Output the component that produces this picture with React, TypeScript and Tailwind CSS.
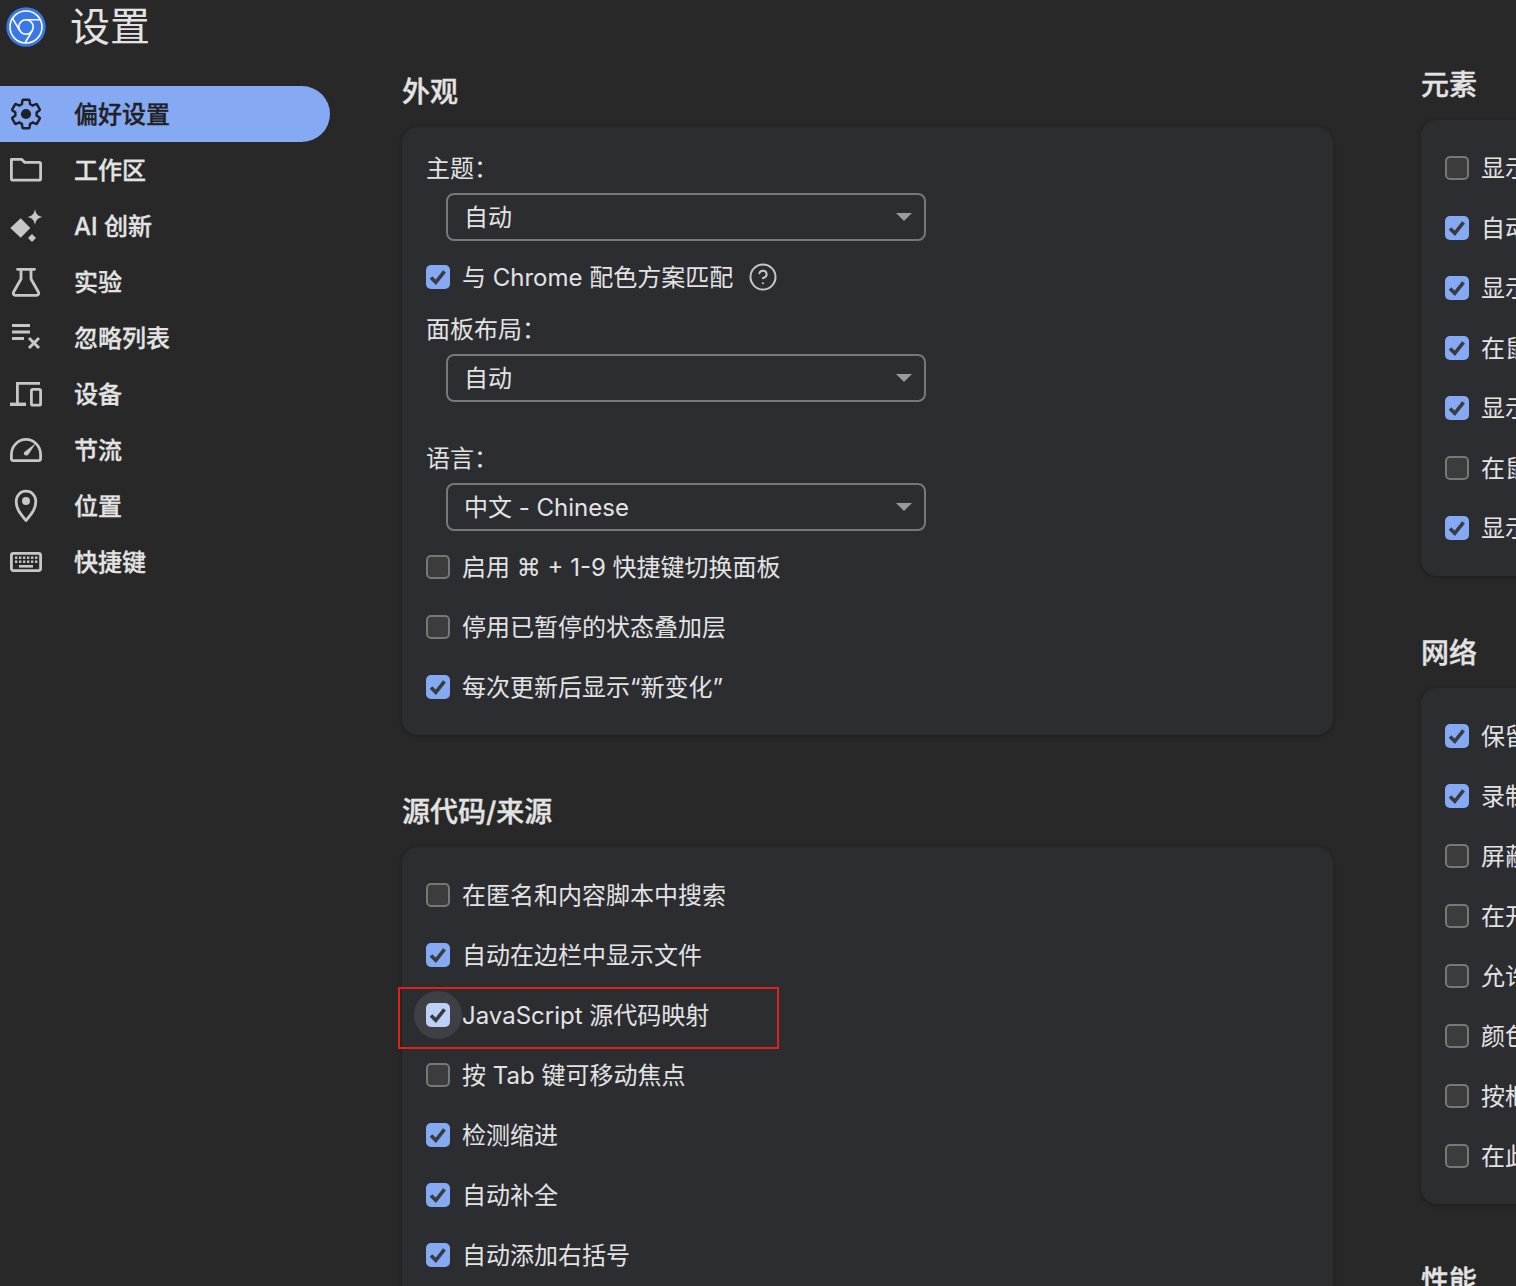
import React from 'react';
import { CircleHelp } from 'lucide-react';

const NAV_COLOR = '#c7c7c7';

function GearIcon() {
  return (
    <svg width="36" height="36" viewBox="0 0 24 24" fill="none" className="ml-2">
      <path
        d="M19.43 12.98c.04-.32.07-.64.07-.98 0-.34-.03-.66-.07-.98l2.11-1.65c.19-.15.24-.42.12-.64l-2-3.46a.5.5 0 0 0-.61-.22l-2.49 1c-.52-.4-1.08-.73-1.69-.98l-.38-2.65A.488.488 0 0 0 14 2h-4c-.25 0-.46.18-.49.42l-.38 2.65c-.61.25-1.17.59-1.69.98l-2.49-1a.566.566 0 0 0-.61.22l-2 3.46c-.13.22-.07.49.12.64l2.11 1.65c-.04.32-.07.65-.07.98 0 .33.03.66.07.98l-2.11 1.65c-.19.15-.24.42-.12.64l2 3.46a.5.5 0 0 0 .61.22l2.49-1c.52.4 1.08.73 1.69.98l.38 2.65c.03.24.24.42.49.42h4c.25 0 .46-.18.49-.42l.38-2.65c.61-.25 1.17-.59 1.69-.98l2.49 1a.5.5 0 0 0 .61-.22l2-3.46c.12-.22.07-.49-.12-.64l-2.11-1.65z"
        stroke="#1f2125"
        strokeWidth="1.700"
        transform="translate(.6 .6) scale(.95)"
      />
      <circle cx="12" cy="12" r="3.400" fill="#1f2125" />
    </svg>
  );
}

// all nav icons are drawn on a 40px box
function Icon40({ children }: { children: React.ReactNode }) {
  return (
    <svg width="40" height="40" viewBox="0 0 40 40" fill="none" stroke={NAV_COLOR} strokeWidth="2.800" className="ml-1.5 shrink-0">
      {children}
    </svg>
  );
}

const FolderIcon = () => (
  <Icon40>
    <path d="M5.400 9.400h10.400l3 3h14.400c1 0 1.400.6 1.400 1.400v15c0 1-.4 1.400-1.400 1.400H6.800c-1 0-1.400-.4-1.400-1.400z" strokeLinejoin="round" />
  </Icon40>
);

const SparkIcon = () => (
  <Icon40>
    <g fill={NAV_COLOR} stroke="none">
      <path d="M14.700 12.200l9.600 9.800-9.600 9.800L4.300 22z" />
      <path d="M26 28l4 4-4 4-4-4z" />
      <path d="M29 3c.8 4.600 2.400 6.800 7.500 8-5.100 1.200-6.700 3.400-7.500 8-.8-4.600-2.400-6.800-7.500-8 5.100-1.200 6.700-3.400 7.500-8z" />
    </g>
  </Icon40>
);

const FlaskIcon = () => (
  <Icon40>
    <path d="M11.500 7.300h17M15 7.300v9.700L7.600 30c-.9 1.800 0 3.300 2 3.300h20.800c2 0 2.900-1.500 2-3.300L25 17V7.300" strokeLinejoin="round" strokeLinecap="round" />
  </Icon40>
);

const ListXIcon = () => (
  <Icon40>
    <path d="M6 7.500h18M6 14h18M6 20.500h12" />
    <path d="M23 20l10 10M33 20L23 30" strokeWidth="3" />
  </Icon40>
);

const DevicesIcon = () => (
  <Icon40>
    <path d="M34 9.400H11.400V29" />
    <path d="M4 30.300h16" strokeWidth="3.400" />
    <rect x="25.400" y="15.400" width="9.200" height="15.800" rx="1.500" />
  </Icon40>
);

const GaugeIcon = () => (
  <Icon40>
    <path d="M7.200 30.600h25.600c1.400 0 1.800-.7 1.800-2v-4c0-8.400-6.600-15.200-14.600-15.200S5.400 16.200 5.400 24.600v4c0 1.300.4 2 1.800 2z" strokeLinejoin="round" />
    <path d="M30 13L22.500 24.500c-1 1.500-3.600 1.300-4.500-.2-.5-1.100 0-2.200 1-2.800z" fill={NAV_COLOR} stroke="none" />
  </Icon40>
);

const PinIcon = () => (
  <Icon40>
    <path d="M20 34.500C14 27.500 10.200 22.500 10.200 15.500 10.200 9.500 14.500 5.200 20 5.200s9.800 4.300 9.800 10.300c0 7-3.800 12-9.800 19z" strokeLinejoin="round" />
    <circle cx="20" cy="15" r="4" fill={NAV_COLOR} stroke="none" />
  </Icon40>
);

const KeyboardIcon = () => (
  <Icon40>
    <rect x="5.400" y="11.400" width="29.200" height="17.200" rx="2" />
    <g fill={NAV_COLOR} stroke="none">
      {[9, 13, 17, 21, 25, 29].map((x) => (
        <React.Fragment key={x}>
          <rect x={x} y="14.500" width="2.400" height="2.400" />
          <rect x={x} y="18.500" width="2.400" height="2.400" />
        </React.Fragment>
      ))}
      <rect x="13" y="23" width="14" height="2.600" />
    </g>
  </Icon40>
);

function Logo() {
  return (
    <svg width="40" height="40" viewBox="0 0 40 40" fill="none" className="ml-1.5">
      <circle cx="20" cy="20" r="19.700" fill="#3b78e7" />
      <g stroke="#fff" strokeWidth="1.600" fill="none">
        <circle cx="20" cy="20" r="16" />
        <circle cx="20" cy="20" r="7.200" />
        <path d="M20 12.800h14.500M13.700 23.600L6.400 11.200M26.300 23.600L19 36" />
      </g>
    </svg>
  );
}

const NAV_ITEMS = [
  { label: '工作区', icon: FolderIcon },
  { label: 'AI 创新', icon: SparkIcon },
  { label: '实验', icon: FlaskIcon },
  { label: '忽略列表', icon: ListXIcon },
  { label: '设备', icon: DevicesIcon },
  { label: '节流', icon: GaugeIcon },
  { label: '位置', icon: PinIcon },
  { label: '快捷键', icon: KeyboardIcon },
];

function Checkbox({ checked, focused }: { checked: boolean; focused?: boolean }) {
  if (!checked) {
    return <span className="w-6 h-6 shrink-0 rounded-[5px] border-2 border-[#76777a] bg-[#3c3c3c]" />;
  }
  return (
    <span className="relative w-6 h-6 shrink-0">
      {focused && <span className="absolute -inset-3 rounded-full bg-[#3f4045]" />}
      <span className={`absolute inset-0 rounded-[5px] flex items-center justify-center ${focused ? 'bg-[#bdd0f8]' : 'bg-[#85a9f2]'}`}>
        <svg width="24" height="24" viewBox="0 0 24 24" fill="none" stroke="#3a3b3f" strokeWidth="3.600">
          <path d="M5 12.500l4.800 4.800 8.700-11" />
        </svg>
      </span>
    </span>
  );
}

function CheckRow({ label, checked, focused, children }: { label: React.ReactNode; checked: boolean; focused?: boolean; children?: React.ReactNode }) {
  return (
    <div className="relative h-[60px] flex items-center gap-3 whitespace-nowrap">
      <Checkbox checked={checked} focused={focused} />
      <span className="relative translate-y-px">{label}</span>
      {children}
    </div>
  );
}

function Select({ value }: { value: string }) {
  return (
    <div className="ml-5 mt-[9px] w-[480px] h-12 rounded-lg border-2 border-[#77787b] pl-4 pr-3 flex items-center justify-between">
      <span className="translate-y-px">{value}</span>
      <svg width="16" height="8" viewBox="0 0 16 8">
        <path d="M0 0h16L8 8z" fill="#9b9b9b" />
      </svg>
    </div>
  );
}

function Card({ children, className = '' }: { children: React.ReactNode; className?: string }) {
  return <div className={`bg-[#2c2d31] rounded-2xl px-6 shadow-[0_1px_4px_rgba(0,0,0,0.3)] ${className}`}>{children}</div>;
}

function Heading({ children, className = '' }: { children: React.ReactNode; className?: string }) {
  return <h2 className={`h-10 leading-10 mb-[15px] text-[28px] font-medium text-[#e3e3e3] [-webkit-text-stroke:0.35px_currentColor] ${className}`}>{children}</h2>;
}

const ELEMENT_ROWS: [string, boolean][] = [
  ['显示用户代理 Shadow DOM', false],
  ['自动换行', true],
  ['显示 HTML 注释', true],
  ['在鼠标悬停时显示标尺', true],
  ['显示 CSS 文档提示', true],
  ['在鼠标悬停时显示详情', false],
  ['显示“滚动到视图”', true],
];

const NETWORK_ROWS: [string, boolean][] = [
  ['保留日志', true],
  ['录制网络日志', true],
  ['屏蔽广告', false],
  ['在开发者工具打开时停用缓存', false],
  ['允许生成 HAR', false],
  ['颜色代码资源类型', false],
  ['按框架分组', false],
  ['在此面板中显示', false],
];

const SOURCE_ROWS: [string, boolean][] = [
  ['在匿名和内容脚本中搜索', false],
  ['自动在边栏中显示文件', true],
  ['JavaScript 源代码映射', true],
  ['按 Tab 键可移动焦点', false],
  ['检测缩进', true],
  ['自动补全', true],
  ['自动添加右括号', true],
];

export default function App() {
  return (
    <div className="h-[1286px] w-full overflow-hidden flex bg-[#282828] text-[24px] leading-8 text-[#e3e3e3] font-['Inter','Noto_Sans_CJK_SC',sans-serif]">
      {/* Sidebar */}
      <aside className="w-[402px] shrink-0">
        <div className="h-[54px] flex items-center">
          <Logo />
          <h1 className="ml-6 text-[40px] leading-[54px] font-normal text-[#e3e3e3]">设置</h1>
        </div>
        <nav className="mt-8 w-[330px] [-webkit-text-stroke:0.3px_currentColor]">
          <div className="h-14 rounded-r-full bg-[#85a9f2] flex items-center text-[#1f2125] font-medium">
            <GearIcon />
            <span className="ml-[30px] translate-y-px">偏好设置</span>
          </div>
          {NAV_ITEMS.map((item) => (
            <div key={item.label} className="h-14 flex items-center font-medium">
              <item.icon />
              <span className="ml-7 translate-y-px">{item.label}</span>
            </div>
          ))}
        </nav>
      </aside>

      {/* Left column */}
      <main className="w-[931px] shrink-0 pt-[72px]">
        <Heading>外观</Heading>
        <Card className="pt-[25px] pb-[18px]">
          <div className="translate-y-px">主题：</div>
          <Select value="自动" />
          <div className="mt-1.5">
            <CheckRow label="与 Chrome 配色方案匹配" checked>
              <CircleHelp size={30} strokeWidth={1.6} className="ml-[3px] text-[#c7c7c7]" />
            </CheckRow>
          </div>
          <div className="mt-1.5 translate-y-px">面板布局：</div>
          <Select value="自动" />
          <div className="mt-10 translate-y-px">语言：</div>
          <Select value="中文 - Chinese" />
          <div className="mt-1.5">
            <CheckRow
              label={
                <>
                  启用 <span className="font-['DejaVu_Sans',sans-serif]">⌘</span> + 1-9 快捷键切换面板
                </>
              }
              checked={false}
            />
            <CheckRow label="停用已暂停的状态叠加层" checked={false} />
            <CheckRow label="每次更新后显示“新变化”" checked />
          </div>
        </Card>

        <Heading className="mt-[57px]">源代码/来源</Heading>
        <Card className="py-[18px]">
          {SOURCE_ROWS.map(([label, checked]) =>
            label.startsWith('JavaScript') ? (
              <CheckRow key={label} label={label} checked={checked} focused>
                <span className="absolute -left-7 top-0.5 w-[381px] h-[62px] border-2 border-[#e0201b]" />
              </CheckRow>
            ) : (
              <CheckRow key={label} label={label} checked={checked} />
            ),
          )}
        </Card>
      </main>

      {/* Right column, runs off the page */}
      <section className="ml-[88px] w-[931px] shrink-0 pt-[65px]">
        <Heading>元素</Heading>
        <Card className="py-[18px]">
          {ELEMENT_ROWS.map(([label, checked]) => (
            <CheckRow key={label} label={label} checked={checked} />
          ))}
        </Card>
        <Heading className="mt-[57px]">网络</Heading>
        <Card className="py-[18px]">
          {NETWORK_ROWS.map(([label, checked]) => (
            <CheckRow key={label} label={label} checked={checked} />
          ))}
        </Card>
        <Heading className="mt-[57px]">性能</Heading>
      </section>
    </div>
  );
}
